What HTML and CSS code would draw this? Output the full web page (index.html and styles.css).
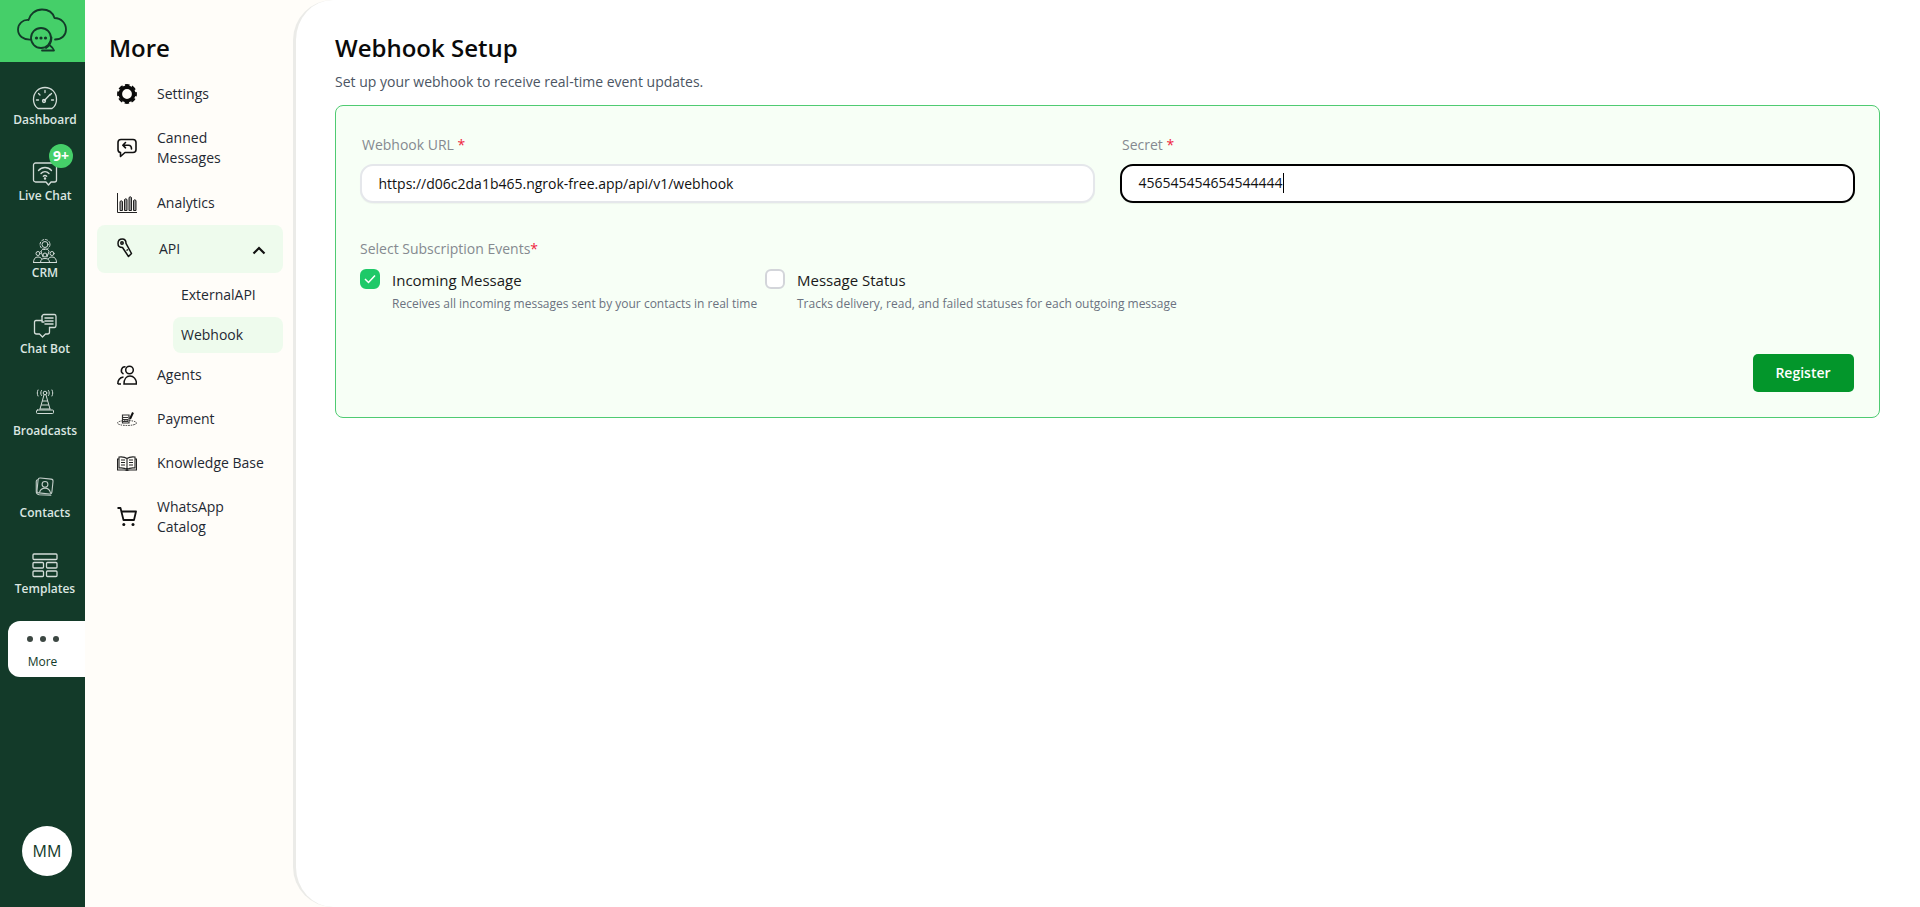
FILE: index.html
```html
<!DOCTYPE html>
<html lang="en">
<head>
<meta charset="utf-8">
<title>Webhook Setup</title>
<link rel="stylesheet" href="styles.css">
</head>
<body>
<div class="app">
  <aside class="rail">
    <div class="logo">
      <svg width="50" height="44" viewBox="0 0 50 44" fill="none" stroke="#133a29" stroke-width="1.800" stroke-linecap="round" stroke-linejoin="round">
        <path d="M14 31.500C6 32 1 27.500 1 21.500C1 15.500 6 11.500 11.500 12C13 6 18.500 1.500 25 1.500C31.500 1.500 36 5 37.500 10C44 10 49 15 49 21.500C49 27.500 44.500 31.500 38 31.500"/>
        <circle cx="24" cy="30" r="10"/>
        <path d="M34.500 29.500C34.500 34 32 38 29 40"/>
        <path d="M25 42.500H37M33 37.500C35 39 36.500 40.500 37 42.500"/>
        <circle cx="19.500" cy="30" r="1.600" fill="#133a29" stroke="none"/>
        <circle cx="24" cy="30" r="1.600" fill="#133a29" stroke="none"/>
        <circle cx="28.500" cy="30" r="1.600" fill="#133a29" stroke="none"/>
      </svg>
    </div>
    <nav class="rail-nav">
      <a class="rail-item item-dash">
        <span class="glyph"><svg class="rail-icon" width="26" height="24" viewBox="0 0 26 24">
          <path d="M6 22.500C3 20.500 1.500 17 1.500 13.500C1.500 6.500 6.500 1.500 13 1.500C19.500 1.500 24.500 6.500 24.500 13.500C24.500 17 23 20.500 20 22.500Z"/>
          <path d="M13 4.500V6.500M6.500 7.500L8 9M19.500 7.500L18 9M4.500 14H6.500M19.500 14H21.500M12 15L18 8.500"/>
          <circle cx="12" cy="15" r="1.500"/>
        </svg></span>
        <span>Dashboard</span>
      </a>
      <a class="rail-item item-live">
        <span class="glyph"><svg class="rail-icon" width="26" height="26" viewBox="0 0 26 26">
          <path d="M3.500 2H22.500C23.500 2 24.500 3 24.500 4V19C24.500 20 23.500 21 22.500 21H19L16.500 24L14 21H3.500C2.500 21 1.500 20 1.500 19V4C1.500 3 2.500 2 3.500 2Z"/>
          <path d="M6.500 9.500C10 5.500 16 5.500 19.500 9.500M9 12.500C11.200 10 14.800 10 17 12.500M11.300 15.300C12.300 14.300 13.700 14.300 14.700 15.300"/>
          <circle cx="13" cy="17.500" r=".6"/>
        </svg></span>
        <span>Live Chat</span>
        <b class="badge">9+</b>
      </a>
      <a class="rail-item item-crm">
        <span class="glyph"><svg class="rail-icon rail-icon-thin" width="26" height="26" viewBox="0 0 26 26">
          <circle cx="13" cy="6.500" r="3"/>
          <circle cx="13" cy="6.500" r="5" stroke-dasharray="2 1.930"/>
          <path d="M9 13.500C9.500 11.500 11 11 13 11C15 11 16.500 11.500 17 13.500L15 19"/>
          <path d="M11 19L9 13.500"/>
          <circle cx="6" cy="15.500" r="2"/><circle cx="20" cy="15.500" r="2"/><circle cx="13" cy="17" r="2"/>
          <path d="M1.500 24.500C1.500 21 3 19 6 19C7.500 19 8.500 19.500 9.500 20.500M8.500 24.500C8.500 21.500 10 20.500 13 20.500C16 20.500 17.500 21.500 17.500 24.500M16.500 20.500C17.500 19.500 18.500 19 20 19C23 19 24.500 21 24.500 24.500M1.500 24.500H24.500"/>
        </svg></span>
        <span>CRM</span>
      </a>
      <a class="rail-item item-bot">
        <span class="glyph"><svg class="rail-icon" width="24" height="26" viewBox="0 0 24 26">
          <path d="M9 3.500C9 2.500 10 1.500 11 1.500H21.500C22.500 1.500 23 2.500 23 3.500V12.500C23 13.500 22.500 14.500 21.500 14.500H16.500"/>
          <path d="M9 3.500V9H11"/>
          <path d="M3 7.500H9M1.500 9V19C1.500 20 2.500 21 3.500 21H6.500L9.500 24L12.500 21H14.500C15.500 21 16.500 20 16.500 19V14.500M1.500 9C1.500 8 2 7.500 3 7.500"/>
          <path d="M12 5H20M12 8H20M12 11H20" stroke-width="1.500"/>
        </svg></span>
        <span>Chat Bot</span>
      </a>
      <a class="rail-item item-broad">
        <span class="glyph"><svg class="rail-icon rail-icon-thin" width="24" height="26" viewBox="0 0 24 26">
          <circle cx="12" cy="4" r="1.800"/>
          <path d="M8.500 1.500C7.500 3 7.500 5 8.500 6.500M15.500 1.500C16.500 3 16.500 5 15.500 6.500M5 1C4 3 4 5 5 7M19 1C20 3 20 5 19 7"/>
          <path d="M11 6L7 20M13 6L17 20M9.500 12H14.500M8.500 16H15.500M7 20H17"/>
          <rect x="3.500" y="21" width="17" height="3.500" rx="1"/>
        </svg></span>
        <span>Broadcasts</span>
      </a>
      <a class="rail-item item-contacts">
        <span class="glyph"><svg class="rail-icon rail-icon-soft" width="20" height="20" viewBox="0 0 24 24">
          <rect x="3" y="3" width="18" height="18" rx="2.500" transform="rotate(6 12 12)"/>
          <path d="M3 4.500C2 4.700 1.500 5.500 1.500 6.500V19C1.500 21 3 22 5 22.500L19 23"/>
          <circle cx="12" cy="10" r="3.500"/>
          <path d="M5.500 19.500C6.500 16 9 14.500 12 14.500C15 14.500 17.500 16 18.500 20"/>
        </svg></span>
        <span>Contacts</span>
      </a>
      <a class="rail-item item-templates">
        <span class="glyph"><svg class="rail-icon" width="26" height="25" viewBox="0 0 26 25">
          <rect x="1" y="1" width="24" height="5.500" rx="1"/>
          <rect x="1" y="9.500" width="10.500" height="5.500" rx="1"/>
          <rect x="14.500" y="9.500" width="10.500" height="5.500" rx="1"/>
          <rect x="1" y="18" width="10.500" height="5.500" rx="1"/>
          <rect x="14.500" y="18" width="10.500" height="5.500" rx="1"/>
        </svg></span>
        <span>Templates</span>
      </a>
      <a class="rail-more">
        <span class="dots"><i></i><i></i><i></i></span>
        <span>More</span>
      </a>
    </nav>
    <div class="avatar">MM</div>
  </aside>

  <aside class="side">
    <h2 class="side-title">More</h2>
    <ul class="side-list">
      <li class="side-item">
        <svg class="side-icon" width="20" height="20" viewBox="0 0 20 20" fill="none" stroke="#0a0a0a"><circle cx="10" cy="10" r="6.700" stroke-width="3.600"/><circle cx="10" cy="10" r="9" stroke-width="1.800" stroke-dasharray="4.600 2.469" stroke-dashoffset="2.300"/></svg>
        <span>Settings</span>
      </li>
      <li class="side-item side-double">
        <svg class="side-icon" width="20" height="20" viewBox="0 0 20 20" fill="none" stroke="#111" stroke-width="1.600" stroke-linecap="round" stroke-linejoin="round"><path d="M4 1.500H16C18 1.500 19 2.500 19 4.500V11.500C19 13.500 18 14.500 16 14.500H8L3.500 18.500V14.500C2 14.300 1 13.300 1 11.500V4.500C1 2.500 2 1.500 4 1.500Z"/><path d="M8.500 4.500L5.800 7.200L8.500 9.800M6 7.200H11.500C13.500 7.200 14.500 8.500 14.500 11"/></svg>
        <span>Canned Messages</span>
      </li>
      <li class="side-item side-analytics">
        <svg class="side-icon" width="20" height="20" viewBox="0 0 20 20" fill="none" stroke="#222" stroke-width="1"><path d="M.5 0V19.500H20"/><path d="M3 17.500V8.500Q4.200 7 5.500 8.500V17.500ZM7.500 17.500V6.500Q8.700 5 10 6.500V17.500ZM12 17.500V4.500Q13.200 3 14.500 4.500V17.500ZM16.500 17.500V7.500Q17.700 6 19 7.500V17.500Z" fill="#999"/></svg>
        <span>Analytics</span>
      </li>
      <li class="side-item side-open">
        <svg class="side-icon side-icon-key" width="16" height="20" viewBox="0 0 16 20" fill="none" stroke="#111" stroke-width="1.500" stroke-linejoin="round"><path d="M1 5.500C1 2.500 3 1 5.300 1C7.600 1 9 3 9 5.300L14.500 15.500L11.500 18.500L5.500 9.500C3 9.500 1 8 1 5.500Z"/><circle cx="5" cy="5" r="1.200"/><path d="M9.500 12.500L11 11.500"/></svg>
        <span class="side-open-label">API</span>
        <svg class="chevron" width="14" height="9" viewBox="0 0 14 9" fill="none" stroke="#111" stroke-width="2.200"><path d="M1.500 7.500L7 2L12.500 7.500"/></svg>
      </li>
      <li class="side-sub">ExternalAPI</li>
      <li class="side-sub side-sub-active">Webhook</li>
      <li class="side-item">
        <svg class="side-icon" width="20" height="20" viewBox="0 0 20 20" fill="none" stroke="#111" stroke-width="1.500"><circle cx="12.500" cy="5" r="3.800"/><path d="M8.500 1.800A3.800 3.800 0 0 0 6.500 9"/><path d="M7 19C7 14 9.500 11 13 11C16.500 11 19.500 14 19.500 19Z"/><path d="M.8 19C.8 15 3 12.500 6.500 12M.8 19H4"/></svg>
        <span>Agents</span>
      </li>
      <li class="side-item">
        <svg class="side-icon" width="20" height="14" viewBox="0 0 20 14" fill="none" stroke="#333" stroke-width="1"><ellipse cx="10" cy="11" rx="9.500" ry="2.500" stroke-dasharray="1.500 1"/><path d="M5.500 3H12V11H5.500ZM5.500 5.500H11M5.500 7.500H11M5.500 9.500H11" stroke-width="1.200"/><path d="M13 7L16 .5" stroke="#111" stroke-width="2"/></svg>
        <span>Payment</span>
      </li>
      <li class="side-item">
        <svg class="side-icon" width="20" height="15" viewBox="0 0 20 15" fill="none" stroke="#222" stroke-width="1.100"><path d="M10 2.500C8 1 5 .7 2 1V12C5 11.700 8 12 10 13.500C12 12 15 11.700 18 12V1C15 .7 12 1 10 2.500ZM10 2.500V13.500"/><path d="M2 3H.5V14H7.500L10 14.500L12.500 14H19.500V3H18"/><path d="M4 4H8M4 6.500H8M4 9H8M12 4H16M12 6.500H16M12 9H16"/></svg>
        <span>Knowledge Base</span>
      </li>
      <li class="side-item side-double">
        <svg class="side-icon" width="20" height="20" viewBox="0 0 20 20" fill="none" stroke="#111" stroke-width="1.800" stroke-linejoin="round"><path d="M.5 1H3.500L6.500 13H17L19 4.500H4.500"/><circle cx="6.800" cy="17.500" r="1.500" fill="#111" stroke="none"/><circle cx="16" cy="17.500" r="1.500" fill="#111" stroke="none"/></svg>
        <span>WhatsApp Catalog</span>
      </li>
    </ul>
  </aside>

  <main class="main">
    <h1 class="title">Webhook Setup</h1>
    <p class="subtitle">Set up your webhook to receive real-time event updates.</p>
    <section class="card">
      <div class="fields">
        <div class="group">
          <label class="label">Webhook URL <em>*</em></label>
          <div class="field">https://d06c2da1b465.ngrok-free.app/api/v1/webhook</div>
        </div>
        <div class="group">
          <label class="label">Secret <em>*</em></label>
          <div class="field field-focus"><span class="caret">456545454654544444</span></div>
        </div>
      </div>
      <div class="events-title">Select Subscription Events<em>*</em></div>
      <div class="events">
        <div class="event event-first">
          <span class="check check-on"><svg width="12" height="10" viewBox="0 0 12 10" fill="none" stroke="#fff" stroke-width="1.500"><path d="M1 5L4.500 8.500L11 1.500"/></svg></span>
          <div>
            <div class="event-name">Incoming Message</div>
            <div class="event-desc">Receives all incoming messages sent by your contacts in real time</div>
          </div>
        </div>
        <div class="event">
          <span class="check"></span>
          <div>
            <div class="event-name">Message Status</div>
            <div class="event-desc">Tracks delivery, read, and failed statuses for each outgoing message</div>
          </div>
        </div>
      </div>
      <div class="actions"><button class="register" type="button">Register</button></div>
    </section>
  </main>
</div>
</body>
</html>
```
FILE: styles.css
```css
* { box-sizing: border-box; }
html, body { margin: 0; height: 100%; }
body { font-family: "Open Sans", "Liberation Sans", sans-serif; background: #fffdf9; color: #111; overflow: hidden; }
.app { display: flex; height: 907px; }

.rail { width: 85px; flex: none; background: #133a29; display: flex; flex-direction: column; }
.logo { height: 62px; background: #45cf69; display: flex; justify-content: center; padding-top: 8px; padding-right: 2px; flex: none; }
.rail-nav { display: flex; flex-direction: column; flex: 1; padding-top: 22px; }
.rail-item { --label-top: 27px; --item-h: 77px; position: relative; height: var(--item-h); padding-left: 5px; display: flex; flex-direction: column; align-items: center; color: #dbe6e1; font-size: 12px; font-weight: 600; line-height: 16px; }
.item-dash { --label-top: 26px; padding-top: 2px; }
.item-crm { --item-h: 75px; }
.item-bot { --label-top: 28px; --item-h: 76px; }
.item-broad { --label-top: 34px; --item-h: 87px; }
.item-contacts { --label-top: 29px; --item-h: 77px; }
.item-templates { --label-top: 28px; --item-h: 68px; }
.glyph { display: block; height: var(--label-top); }
.rail-icon { display: block; fill: none; stroke: #d3dcd8; stroke-width: 1.300; stroke-linecap: round; stroke-linejoin: round; }
.rail-icon-thin { stroke-width: 1; }
.rail-icon-soft { stroke-width: 1.300; stroke: #c3cec9; }
.badge { position: absolute; left: 49px; top: -17px; width: 24px; height: 24px; border-radius: 50%; background: #45cf69; color: #fff; font-size: 14px; font-weight: 700; line-height: 24px; text-align: center; }
.rail-more { margin-left: 8px; width: 77px; height: 56px; background: #fff; border-radius: 12px 0 0 12px; display: flex; flex-direction: column; align-items: center; color: #133a29; font-size: 12px; font-weight: 500; line-height: 16px; padding: 15px 8px 0 0; gap: 12px; }
.dots { display: flex; gap: 7px; }
.dots i { width: 6px; height: 6px; border-radius: 50%; background: #3c4742; }
.avatar { flex: none; width: 50px; height: 50px; margin: 0 0 31px 22px; border-radius: 50%; background: #fff; color: #133a29; font-size: 16px; display: flex; align-items: center; justify-content: center; }

.side { width: 208px; flex: none; padding: 32px 10px 0 12px; }
.side-title { margin: 0 0 0 12px; font-size: 24px; font-weight: 600; line-height: 32px; color: #0c0c0c; }
.side-list { list-style: none; margin: 8px 0 0; padding: 0; }
.side-item { display: flex; align-items: center; height: 44px; font-size: 14px; line-height: 20px; color: #1f2933; padding-left: 20px; gap: 20px; }
.side-item span { width: 110px; }
.side-double { height: 64px; }
.side-analytics { height: 45px; }
.side-icon { flex: none; }
.side-open { height: 48px; background: #eefbed; border-radius: 8px; position: relative; }
.side-open-label { margin-left: 2px; }
.side-icon-key { margin-right: 4px; margin-top: -2px; }
.chevron { position: absolute; right: 17px; top: 21px; }
.side-sub { margin-left: 76px; height: 36px; display: flex; align-items: center; padding: 0 0 2px 8px; font-size: 14px; color: #1f2933; border-radius: 8px; }
.side-open + .side-sub { margin-top: 4px; margin-bottom: 4px; }
.side-sub-active { background: #eefbed; }

.main { flex: 1; min-width: 0; background: #fff; border-left: 3px solid #ebebe8; border-radius: 40px 0 0 40px; padding: 32px 40px 0 39px; }
.title { margin: 0; font-size: 24px; font-weight: 600; line-height: 32px; color: #0a0a0a; }
.subtitle { margin: 8px 0 0; font-size: 14px; line-height: 20px; color: #4b5563; }
.card { margin-top: 13px; height: 313px; border: 1.500px solid #4fcb72; border-radius: 8px; background: #f7fff6; padding: 29px 24px 0; position: relative; }
.fields { display: flex; gap: 25px; }
.group { flex: 1; min-width: 0; }
.label { display: block; font-size: 14px; line-height: 20px; color: #858a90; padding-left: 2px; margin-bottom: 8.500px; }
.label em, .events-title em { color: #ef233c; font-style: normal; }
.field { height: 39.500px; background: #fff; border: 2.500px solid #e5e7eb; border-radius: 13px; padding: 0 17px 0 16.500px; font-size: 14px; display: flex; align-items: center; color: #111; box-shadow: 0 1px 1px rgba(0,0,0,.04); }
.field-focus { border-color: #000; }
.caret { border-right: 1px solid #000; line-height: 20px; height: 20px; display: block; }
.events-title { margin-top: 36px; font-size: 14px; line-height: 20px; color: #858a90; }
.events { display: flex; margin-top: 10px; }
.event { display: flex; gap: 12px; }
.event-first { width: 405px; }
.check { flex: none; width: 20px; height: 20px; border-radius: 6px; border: 2px solid #d3d5da; background: #fff; display: flex; align-items: center; justify-content: center; }
.check-on { background: #1ec968; border-color: #1ec968; }
.event-name { font-size: 15px; line-height: 22px; color: #1a1a1a; }
.event-desc { font-size: 12px; line-height: 16px; margin-top: 5px; color: #6b7280; }
.actions { position: absolute; right: 25.500px; top: 247.500px; }
.register { display: block; width: 101px; height: 38px; border: 0; border-radius: 5px; background: #03962b; color: #fff; font-family: inherit; font-size: 14px; font-weight: 600; }
```
